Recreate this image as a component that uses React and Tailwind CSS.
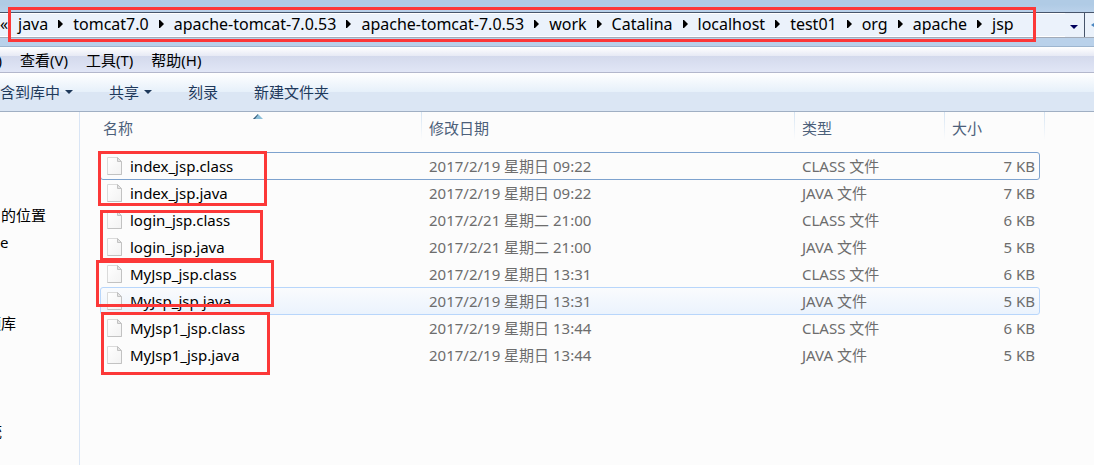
import { useState } from 'react';

const path = [
  'java',
  'tomcat7.0',
  'apache-tomcat-7.0.53',
  'apache-tomcat-7.0.53',
  'work',
  'Catalina',
  'localhost',
  'test01',
  'org',
  'apache',
  'jsp',
];

const files = [
  { name: 'index_jsp.class', date: '2017/2/19 星期日 09:22', type: 'CLASS 文件', size: '7 KB' },
  { name: 'index_jsp.java', date: '2017/2/19 星期日 09:22', type: 'JAVA 文件', size: '7 KB' },
  { name: 'login_jsp.class', date: '2017/2/21 星期二 21:00', type: 'CLASS 文件', size: '6 KB' },
  { name: 'login_jsp.java', date: '2017/2/21 星期二 21:00', type: 'JAVA 文件', size: '5 KB' },
  { name: 'MyJsp_jsp.class', date: '2017/2/19 星期日 13:31', type: 'CLASS 文件', size: '6 KB' },
  { name: 'MyJsp_jsp.java', date: '2017/2/19 星期日 13:31', type: 'JAVA 文件', size: '5 KB' },
  { name: 'MyJsp1_jsp.class', date: '2017/2/19 星期日 13:44', type: 'CLASS 文件', size: '6 KB' },
  { name: 'MyJsp1_jsp.java', date: '2017/2/19 星期日 13:44', type: 'JAVA 文件', size: '5 KB' },
];

// Red frames around each pair of generated files
const marks = [
  'left-[18px] top-[39px] w-[169px] h-[55px]',
  'left-[20px] top-[98px] w-[163px] h-[51px]',
  'left-[16px] top-[148px] w-[178px] h-[47px]',
  'left-[21px] top-[200px] w-[169px] h-[63px]',
];

const FileIcon = () => (
  <svg width="15" height="18" viewBox="0 0 15 18" className="shrink-0">
    <defs>
      <linearGradient id="paper" x1="0" y1="0" x2="1" y2="1">
        <stop offset="0" stopColor="#ffffff" />
        <stop offset="1" stopColor="#f2f2f2" />
      </linearGradient>
    </defs>
    <path d="M.5 .5H10.500L14.500 4.500V17.500H.5Z" fill="url(#paper)" stroke="#dadada" />
    <path d="M14.500 5V17.500H.5" fill="none" stroke="#c2c2c2" />
    <path d="M10.500 .5V4.500H14.500Z" fill="#e4e4e4" stroke="#c2c2c2" />
  </svg>
);

const DownArrow = ({ className }) => (
  <svg width="8" height="4" viewBox="0 0 8 4" className={className}>
    <path d="M0 0H8L4 4Z" fill="currentColor" />
  </svg>
);

const AddressBar = () => (
  <header className="relative h-[46px] bg-linear-to-b from-[#b0cbe5] from-10% to-[#b9d1ea] to-25% pt-3">
    <div className="flex h-[26px] border-t border-b border-t-[#47556b] border-b-[#a2abb8] bg-[#ebf2fb]">
      <nav className="flex flex-1 items-center overflow-hidden border-y border-white pb-[2px] text-base leading-5 text-black">
        <span className="w-[18px] shrink-0">«</span>
        {path.map((part, index) => (
          <span key={index} className="flex items-center">
            {index > 0 && (
              <svg width="5" height="8" viewBox="0 0 5 8" className="mx-[10px]">
                <path d="M0 0H1L5 4L1 8H0Z" fill="#000" />
              </svg>
            )}
            <button>{part}</button>
          </span>
        ))}
      </nav>
      <button aria-label="history" className="flex w-5 items-center border-r border-[#47556b] text-[#00005c]">
        <DownArrow className="mx-[5px] mt-1" />
      </button>
      <div className="flex w-[9px] items-center justify-end text-[#4a86c0]">
        <svg width="3" height="4" viewBox="0 0 3 4">
          <path d="M0 2L3 0V4Z" fill="currentColor" />
        </svg>
      </div>
    </div>
    <div className="pointer-events-none absolute top-[7px] right-[58px] left-2 h-[35px] border-3 border-[#fc3838]" />
  </header>
);

const MenuBar = () => (
  <nav className="flex h-[27px] items-center gap-[18px] border-t border-b border-t-[#9db5cf] border-b-[#b3b7cc] bg-[linear-gradient(to_bottom,#ffffff,#e7eaf5_35%,#d3d9ec_35%,#e1e6f6)] text-black">
    <span className="flex w-[2px] shrink-0 justify-end">)</span>
    <button>查看(V)</button>
    <button>工具(T)</button>
    <button>帮助(H)</button>
  </nav>
);

const ToolBar = () => (
  <div className="flex h-[39px] items-center border-b border-[#a0afc3] bg-[linear-gradient(to_bottom,#ffffff,#e6f0fa_50%,#dbe6f4_50%,#dbe6f4)] text-[#1e395b]">
    <button className="flex items-center gap-[5px]">
      含到库中
      <DownArrow />
    </button>
    <button className="ml-9 flex items-center gap-[5px]">
      共享
      <DownArrow />
    </button>
    <button className="ml-9">刻录</button>
    <button className="ml-9">新建文件夹</button>
  </div>
);

const Sidebar = () => (
  <aside className="w-20 shrink-0 border-r border-[#d9e5f5] pt-[90px] text-black">
    <ul className="leading-[27px]">
      <li className="pl-px">的位置</li>
      <li>e</li>
      <li className="mt-[54px] flex w-4 justify-end overflow-hidden">频库</li>
      <li className="mt-[81px] flex w-[2px] justify-end overflow-hidden">统</li>
    </ul>
  </aside>
);

const HeaderCell = ({ children, className }) => (
  <th className={`relative h-10 pt-[6px] text-left align-top font-normal leading-5 ${className}`}>
    {children}
    <span className="absolute top-0 right-0 h-7 w-px bg-linear-to-b from-[#d5e4f3] to-[#fcfcfc]" />
  </th>
);

const FileTable = ({ selected, onSelect }) => (
  <table className="w-full table-fixed border-separate border-spacing-0 text-[#6d6d6d]">
    <colgroup>
      <col />
      <col className="w-[373px]" />
      <col className="w-[150px]" />
      <col className="w-[100px]" />
    </colgroup>
    <thead className="text-[#4c607a]">
      <tr>
        <HeaderCell className="pl-[3px]">
          名称
          <svg width="10" height="5" viewBox="0 0 10 5" className="absolute top-[2px] left-[153px]">
            <path d="M0 5L5 0L10 5Z" fill="#8cc0da" />
            <path d="M0 5L5 0V1L2 5Z" fill="#3c5e7c" />
          </svg>
        </HeaderCell>
        <HeaderCell className="pl-[7px]">修改日期</HeaderCell>
        <HeaderCell className="pl-[7px]">类型</HeaderCell>
        <HeaderCell className="pl-[7px]">大小</HeaderCell>
      </tr>
    </thead>
    <tbody>
      {files.map((file, index) => (
        <tr key={file.name} onClick={() => onSelect(index)} className="relative h-[27px]">
          <td className="p-0">
            {index === 0 && (
              <span className="absolute top-0 right-[5px] left-0 h-7 rounded-[3px] border border-[#7da2ce]" />
            )}
            {index === selected && (
              <span className="absolute top-0 right-[5px] left-0 h-7 rounded-[3px] border border-[#b8d6fb] bg-linear-to-b from-[#fafbfd] to-[#ebf3fd]" />
            )}
            <span className="relative flex items-center gap-2 pl-[7px] leading-5 text-black">
              <FileIcon />
              {file.name}
            </span>
          </td>
          <td className="relative p-0 pl-[7px]">{file.date}</td>
          <td className="relative p-0 pl-[7px]">{file.type}</td>
          <td className="relative p-0 pr-[10px] text-right">{file.size}</td>
        </tr>
      ))}
    </tbody>
  </table>
);

export default function App() {
  const [selected, setSelected] = useState(5);

  return (
    <div className="flex min-h-screen flex-col overflow-hidden bg-[#fcfcfc] font-['Noto_Sans','Noto_Sans_CJK_SC',sans-serif] text-[15px] leading-5 whitespace-nowrap">
      <AddressBar />
      <MenuBar />
      <ToolBar />
      <div className="flex flex-1">
        <Sidebar />
        <main className="relative flex-1 pr-[49px] pl-5">
          <FileTable selected={selected} onSelect={setSelected} />
          {marks.map((mark) => (
            <div key={mark} className={`pointer-events-none absolute border-3 border-[#fc3838] ${mark}`} />
          ))}
        </main>
      </div>
    </div>
  );
}
